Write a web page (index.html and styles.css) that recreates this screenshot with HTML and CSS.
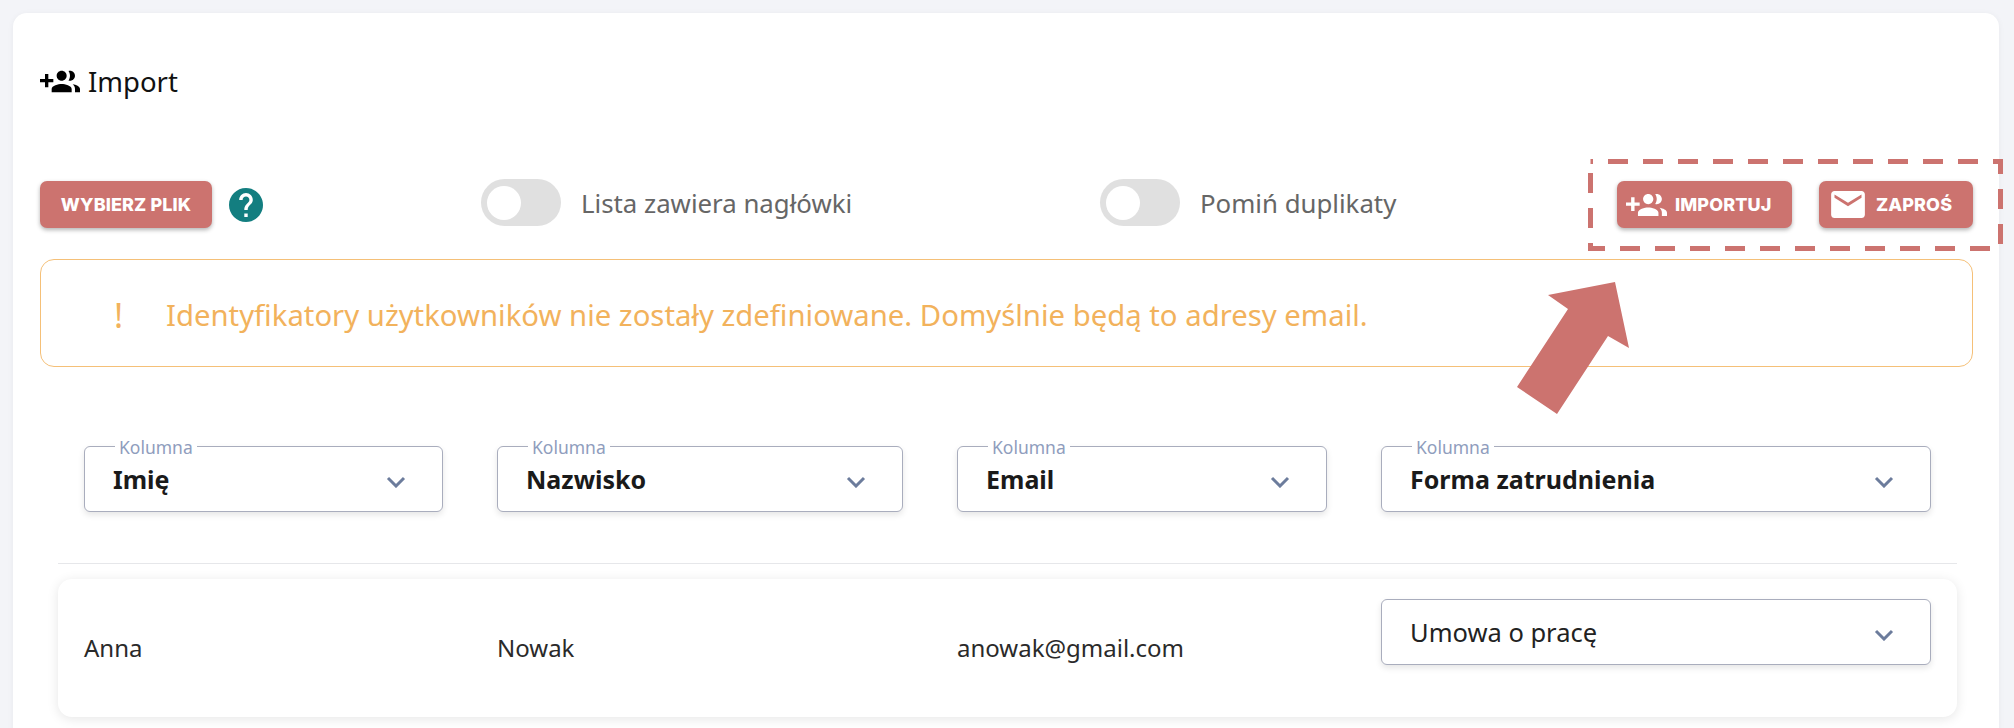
FILE: index.html
```html
<!DOCTYPE html>
<html lang="pl">
<head>
  <meta charset="UTF-8">
  <meta name="viewport" content="width=device-width, initial-scale=1.0">
  <title>Import</title>
  <link rel="stylesheet" href="styles.css">
</head>
<body>
  <div class="card">
    <!-- Title -->
    <h1 class="title">
      <svg class="title-icon" viewBox="0 4.5 24 14"><path d="M8 10H5V7H3v3H0v2h3v3h2v-3h3v-2zm10 1c1.66 0 2.99-1.34 2.99-3S19.66 5 18 5c-.32 0-.63.05-.91.14.57.81.9 1.79.9 2.86s-.34 2.04-.9 2.86c.28.09.59.14.91.14zm-5 0c1.66 0 3-1.34 3-3s-1.34-3-3-3-3 1.34-3 3 1.34 3 3 3zm6.62 2.16c.83.73 1.38 1.66 1.38 2.84v2h3v-2c0-1.54-2.37-2.49-4.38-2.84zM13 13c-2 0-6 1-6 3v2h12v-2c0-2-4-3-6-3z"/></svg>
      Import
    </h1>

    <!-- Toolbar -->
    <div class="toolbar">
      <div class="file-group">
        <button class="btn btn-file">WYBIERZ PLIK</button>
        <svg class="help-icon" viewBox="2 2 20 20"><path d="M12 2C6.48 2 2 6.48 2 12s4.48 10 10 10 10-4.48 10-10S17.52 2 12 2zm1 17h-2v-2h2v2zm2.07-7.75l-.9.92C13.45 12.9 13 13.5 13 15h-2v-.5c0-1.1.45-2.1 1.17-2.83l1.24-1.26c.37-.36.59-.86.59-1.41 0-1.1-.9-2-2-2s-2 .9-2 2H8c0-2.21 1.79-4 4-4s4 1.79 4 4c0 .88-.36 1.68-.93 2.25z"/></svg>
      </div>
      <label class="switch-group">
        <span class="switch"><span class="knob"></span></span>
        Lista zawiera nagłówki
      </label>
      <label class="switch-group">
        <span class="switch"><span class="knob"></span></span>
        Pomiń duplikaty
      </label>
      <div class="actions">
        <button class="btn btn-import">
          <svg class="btn-people" viewBox="0 4.5 24 14"><path d="M8 10H5V7H3v3H0v2h3v3h2v-3h3v-2zm10 1c1.66 0 2.99-1.34 2.99-3S19.66 5 18 5c-.32 0-.63.05-.91.14.57.81.9 1.79.9 2.86s-.34 2.04-.9 2.86c.28.09.59.14.91.14zm-5 0c1.66 0 3-1.34 3-3s-1.34-3-3-3-3 1.34-3 3 1.34 3 3 3zm6.62 2.16c.83.73 1.38 1.66 1.38 2.84v2h3v-2c0-1.54-2.37-2.49-4.38-2.84zM13 13c-2 0-6 1-6 3v2h12v-2c0-2-4-3-6-3z"/></svg>
          IMPORTUJ
        </button>
        <button class="btn btn-invite">
          <svg class="btn-mail" viewBox="2 4 20 16"><path d="M20 4H4c-1.1 0-1.99.9-1.99 2L2 18c0 1.1.9 2 2 2h16c1.1 0 2-.9 2-2V6c0-1.1-.9-2-2-2zm0 4l-8 5-8-5V6l8 5 8-5v2z"/></svg>
          ZAPROŚ
        </button>
      </div>
    </div>

    <!-- Alert -->
    <div class="alert">
      <span class="alert-mark">!</span>
      <span>Identyfikatory użytkowników nie zostały zdefiniowane. Domyślnie będą to adresy email.</span>
    </div>

    <!-- Column mapping -->
    <div class="columns">
      <div class="select select-head">
        <span class="select-label">Kolumna</span>
        <span class="select-value">Imię</span>
        <svg class="chevron" viewBox="0 0 20 12"><path d="M2 2l8 8 8-8"/></svg>
      </div>
      <div class="select select-head">
        <span class="select-label">Kolumna</span>
        <span class="select-value">Nazwisko</span>
        <svg class="chevron" viewBox="0 0 20 12"><path d="M2 2l8 8 8-8"/></svg>
      </div>
      <div class="select select-head">
        <span class="select-label">Kolumna</span>
        <span class="select-value">Email</span>
        <svg class="chevron" viewBox="0 0 20 12"><path d="M2 2l8 8 8-8"/></svg>
      </div>
      <div class="select select-head">
        <span class="select-label">Kolumna</span>
        <span class="select-value">Forma zatrudnienia</span>
        <svg class="chevron" viewBox="0 0 20 12"><path d="M2 2l8 8 8-8"/></svg>
      </div>
    </div>

    <hr class="divider">

    <!-- Rows -->
    <div class="row">
      <span>Anna</span>
      <span>Nowak</span>
      <span>anowak@gmail.com</span>
      <div class="select select-row">
        <span>Umowa o pracę</span>
        <svg class="chevron" viewBox="0 0 20 12"><path d="M2 2l8 8 8-8"/></svg>
      </div>
    </div>
  </div>

  <!-- Annotation over the screenshot -->
  <svg class="annotation" viewBox="0 0 2014 728">
    <rect class="callout" x="1590.5" y="161.5" width="410" height="87"/>
    <polygon class="arrow" points="1615,282 1548,295 1568,309 1517,387 1557,414 1608,336 1629,348"/>
  </svg>
</body>
</html>
```

FILE: styles.css
```css
/* General Styles */
html, body {
  height: 100%;
}

body {
  margin: 0;
  background: #f3f4f8;
  font-family: 'Noto Sans', sans-serif;
  color: #222;
  overflow: hidden;
  position: relative;
}

.card {
  margin: 13px 15px 0 13px;
  padding: 50px 26px 40px 27px;
  min-height: 800px;
  background: #fff;
  border-radius: 14px;
  box-shadow: 0 1px 6px rgba(0, 0, 0, 0.05);
}

/* Title */
.title {
  display: flex;
  align-items: center;
  gap: 8px;
  margin: 0;
  height: 36px;
  font-size: 27.5px;
  font-weight: 400;
  color: #111;
}

.title-icon {
  width: 40px;
  height: 25px;
  fill: #000;
}

/* Toolbar */
.toolbar {
  display: grid;
  grid-template-columns: 441px 619px 1fr auto;
  margin-top: 80px;
  height: 49px;
}

.file-group {
  display: flex;
  align-items: center;
  gap: 17px;
  padding-top: 2px;
}

.help-icon {
  width: 34px;
  height: 34px;
  fill: #137e80;
}

.btn {
  display: flex;
  align-items: center;
  justify-content: center;
  height: 47px;
  padding: 0;
  border: none;
  border-radius: 7px;
  background: #cc736f;
  color: #fff;
  font-family: 'Inter', sans-serif;
  font-size: 18px;
  font-weight: 800;
  letter-spacing: 0.1px;
  box-shadow: 0 2px 4px rgba(0, 0, 0, 0.3);
}

.btn-file {
  width: 172px;
}

.btn-import {
  width: 175px;
  justify-content: flex-start;
  gap: 8px;
  padding-left: 9px;
}

.btn-invite {
  width: 154px;
  justify-content: flex-start;
  gap: 11px;
  padding-left: 12px;
}

.btn-people {
  width: 41px;
  height: 24px;
  fill: #fff;
}

.btn-mail {
  width: 34px;
  height: 27px;
  fill: #fff;
}

.actions {
  display: flex;
  align-items: center;
  gap: 27px;
  padding-top: 2px;
}

.switch-group {
  display: flex;
  align-items: flex-start;
  gap: 20px;
  font-size: 25.8px;
  line-height: 49px;
  color: #666;
}

.switch {
  display: flex;
  align-items: center;
  width: 80px;
  height: 47px;
  padding-left: 6px;
  box-sizing: border-box;
  border-radius: 24px;
  background: #e0e0e0;
}

.knob {
  width: 34px;
  height: 34px;
  border-radius: 50%;
  background: #fff;
}

/* Alert */
.alert {
  display: flex;
  align-items: center;
  height: 108px;
  box-sizing: border-box;
  margin-top: 31px;
  padding: 3px 0 0 73px;
  border: 1.5px solid #f5c078;
  border-radius: 14px;
  color: #f2b25c;
  font-size: 29.3px;
}

.alert-mark {
  width: 52px;
  font-size: 34px;
}

/* Column mapping */
.columns,
.row {
  display: grid;
  grid-template-columns: 359px 406px 370px 550px;
  column-gap: 54px;
  align-items: center;
}

.columns {
  margin-top: 79px;
  padding-left: 44px;
}

.select {
  position: relative;
  display: flex;
  align-items: center;
  justify-content: space-between;
  height: 66px;
  box-sizing: border-box;
  padding: 0 36px 0 28px;
  border: 1.5px solid #a9adbd;
  border-radius: 6px;
  background: #fff;
  box-shadow: 0 3px 6px rgba(0, 0, 0, 0.1);
  font-size: 25.5px;
  color: #222;
}

.select-value {
  font-size: 25px;
  font-weight: 700;
  color: #1a1a1a;
}

.select-row {
  align-self: start;
  margin-top: 20px;
}

.select-label {
  position: absolute;
  top: -10px;
  left: 30px;
  padding: 0 4px;
  background: #fff;
  font-size: 17.5px;
  line-height: 20px;
  color: #8f9dbd;
}

.chevron {
  width: 20px;
  height: 12px;
  margin-top: 6px;
  fill: none;
  stroke: #6c7c9c;
  stroke-width: 3;
}

.divider {
  margin: 51px 16px 0 18px;
  border: none;
  border-top: 1.5px solid #e6e7ea;
}

/* Rows */
.row {
  height: 138px;
  box-sizing: border-box;
  margin: 15px 16px 0 18px;
  padding: 0 0 2px 26px;
  border-radius: 14px;
  background: #fff;
  box-shadow: 0 2px 12px rgba(0, 0, 0, 0.1);
  font-size: 24px;
  color: #2a2a2a;
}

/* Annotation */
.annotation {
  position: absolute;
  left: 0;
  top: 0;
  width: 2014px;
  height: 728px;
}

.callout {
  fill: none;
  stroke: #cc736f;
  stroke-width: 5;
  stroke-dasharray: 20 15;
  stroke-dashoffset: 17.5;
}

.arrow {
  fill: #cc736f;
}
```
